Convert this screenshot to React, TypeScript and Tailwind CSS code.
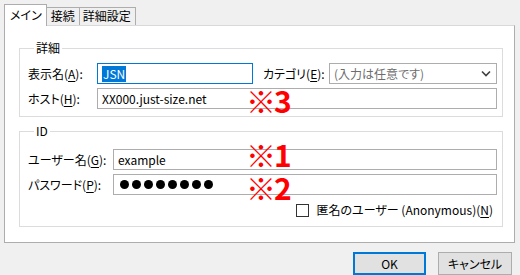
import React from 'react'

function Mn({ children }: { children: React.ReactNode }) {
  return <span className="underline underline-offset-[2px] decoration-1">{children}</span>
}

function TextBox({ width, children, focused }: { width: string; children?: React.ReactNode; focused?: boolean }) {
  return (
    <div
      className={`${width} shrink-0 h-[21px] flex items-center pl-[4px] bg-white border ${
        focused ? 'border-[#0078d7]' : 'border-[#adadad]'
      }`}
    >
      {children}
    </div>
  )
}

function Mark({ n, className }: { n: string; className: string }) {
  return (
    <span
      className={`absolute text-[30px] leading-[26px] font-bold text-[#ff0000] tracking-[-2px] [font-feature-settings:normal] ${className}`}
    >
      ※{n}
    </span>
  )
}

export default function App() {
  return (
    <div className="w-[520px] h-[275px] bg-[#f0f0f0] font-['Noto_Sans_CJK_JP',sans-serif] [font-feature-settings:'palt'] text-[12px] leading-[16px] text-black relative overflow-hidden whitespace-nowrap">
      {/* Tabs */}
      <div className="flex items-end pl-[4px] pt-[4px] h-[25px]">
        <div className="relative z-10 h-[22px] -mb-px pl-[5px] pr-[4px] pt-[2px] bg-white border-l border-t border-r border-[#adadad]">
          メイン
        </div>
        <div className="h-[18px] px-[4px] bg-[#f0f0f0] border-t border-r border-[#adadad]">接続</div>
        <div className="h-[18px] pl-[3px] pr-[4px] bg-[#f0f0f0] border-t border-r border-[#adadad]">詳細設定</div>
      </div>

      {/* Panel */}
      <div className="ml-[4px] w-[511px] h-[218px] bg-white border border-[#adadad] border-t-[#d9d9d9] pl-[14px] pt-[14px]">
        <fieldset className="w-[484px] border border-[#dcdcdc] pl-[8px] pr-[5px] pt-[7px] pb-[7px]">
          <legend className="ml-[6px] px-[2px] leading-[16px]">詳細</legend>
          <div className="flex items-center h-[21px]">
            <span className="w-[69px] shrink-0">
              表示名(<Mn>A</Mn>):
            </span>
            <TextBox width="w-[156px]" focused>
              <span className="bg-[#0078d7] text-white px-[1px]">JSN</span>
            </TextBox>
            <span className="ml-[10px] w-[66px] shrink-0">
              カテゴリ(<Mn>E</Mn>):
            </span>
            <div className="w-[168px] shrink-0 h-[21px] flex items-center justify-between pl-[4px] pr-[5px] bg-white border border-[#adadad] text-[#6d6d6d]">
              <span>(入力は任意です)</span>
              <svg width="10" height="7" viewBox="0 0 10 7">
                <path d="M1 1.5 L5 5.5 L9 1.5" fill="none" stroke="#404040" strokeWidth="1.6" />
              </svg>
            </div>
          </div>
          <div className="flex items-center h-[21px] mt-[4px]">
            <span className="w-[69px] shrink-0">
              ホスト(<Mn>H</Mn>):
            </span>
            <TextBox width="w-[400px]">XX000.just-size.net</TextBox>
          </div>
        </fieldset>

        <fieldset className="w-[484px] mt-[6px] border border-[#dcdcdc] pl-[8px] pr-[5px] pt-[10px] pb-[8px]">
          <legend className="ml-[6px] px-[2px] leading-[16px]">ID</legend>
          <div className="flex items-center h-[21px]">
            <span className="w-[85px] shrink-0">
              ユーザー名(<Mn>G</Mn>):
            </span>
            <TextBox width="w-[384px]">example</TextBox>
          </div>
          <div className="flex items-center h-[21px] mt-[4px]">
            <span className="w-[85px] shrink-0">
              パスワード(<Mn>P</Mn>):
            </span>
            <TextBox width="w-[384px]">
              <div className="flex gap-[3px] pl-[2px]">
                {[0, 1, 2, 3, 4, 5, 6, 7].map(i => (
                  <span key={i} className="w-[9px] h-[9px] rounded-full bg-black" />
                ))}
              </div>
            </TextBox>
          </div>
          <div className="flex items-center justify-end h-[16px] mt-[7px] pr-[4px]">
            <span className="w-[13px] h-[13px] border border-[#333] bg-white mr-[7px]" />
            <span>
              匿名のユーザー (Anonymous)(<Mn>N</Mn>)
            </span>
          </div>
        </fieldset>
      </div>

      {/* Buttons */}
      <div className="flex justify-end gap-[12px] pr-[8px] mt-[9px]">
        <button className="w-[73px] h-[23px] bg-[#e1e1e1] border border-[#0078d7] outline outline-1 outline-[#0078d7] -outline-offset-2">
          OK
        </button>
        <button className="w-[74px] h-[23px] bg-[#e1e1e1] border border-[#adadad]">キャンセル</button>
      </div>

      {/* Annotations */}
      <Mark n="3" className="left-[246px] top-[87px]" />
      <Mark n="1" className="left-[246px] top-[141px]" />
      <Mark n="2" className="left-[246px] top-[174px]" />
    </div>
  )
}
